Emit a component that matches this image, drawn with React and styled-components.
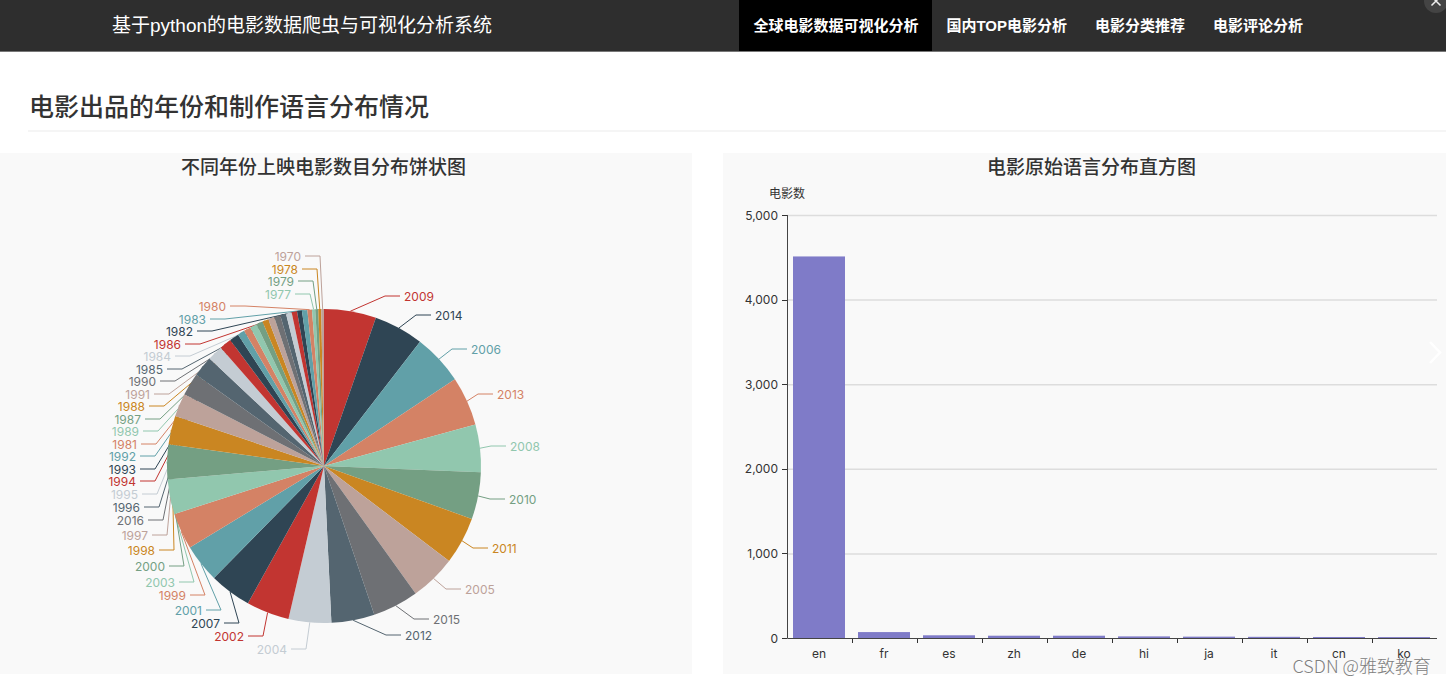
import React, { useState } from 'react'
import styled, { createGlobalStyle } from 'styled-components'

const GlobalStyle = createGlobalStyle`
    body {
        margin: 0;
        background-color: white;
        color: #333;
        font-family: "Liberation Sans", "Noto Sans CJK SC", sans-serif;
    }
`;

const Container = styled.div`
    position: relative;
    overflow: hidden;
    padding-bottom: 10px;
`;
const Header = styled.header`
    display: flex;
    align-items: stretch;
    justify-content: space-between;
    padding: 0 129px 0 112px;
    background-color: #2e2e2e;
    border-bottom: 1px solid #777;
`;
const Brand = styled.a`
    color: white;
    font-size: 19px;
    line-height: 52px;
    height: 51px;
    text-decoration: none;
    white-space: nowrap;
`;
const Nav = styled.nav`
    display: flex;
`;
const NavLink = styled.a`
    padding: 0 14px;
    color: white;
    background-color: ${props=>props.$active ? "black" : "transparent"};
    font-size: 15px;
    font-weight: 700;
    line-height: 51px;
    text-decoration: none;
    white-space: nowrap;
`;
const CloseButton = styled.button`
    position: absolute;
    top: -11px;
    right: -2px;
    width: 24px;
    height: 24px;
    padding: 0;
    display: flex;
    align-items: center;
    justify-content: center;
    border: none;
    border-radius: 50%;
    background-color: #444;
    cursor: pointer;
`;
const PageTitle = styled.h1`
    margin: 37px 0 21px 28px;
    padding: 0 0 5px 1px;
    border-bottom: 2px solid #f5f5f5;
    font-size: 25px;
    font-weight: 500;
    line-height: 36px;
`;
const Charts = styled.main`
    display: grid;
    grid-template-columns: 1fr 1fr;
`;
const Panel = styled.section`
    margin-right: ${props=>props.$gap ? "31px" : "0"};
    background-color: #f9f9f9;
`;
const PanelTitle = styled.h2`
    margin: 0;
    padding: ${props=>props.$pie ? "0 45px 0 0" : "0 0 0 14px"};
    font-size: 19px;
    font-weight: 500;
    line-height: 30px;
    text-align: center;
`;
const Chart = styled.svg`
    display: block;
    width: 100%;
    height: auto;
`;
const ChartText = styled.text`
    font-family: Inter, "Noto Sans CJK SC", sans-serif;
    font-size: 12px;
    dominant-baseline: central;
`;
const NextButton = styled.button`
    position: absolute;
    top: 338px;
    right: 2px;
    padding: 0;
    border: none;
    background: none;
    cursor: pointer;
`;
const Watermark = styled.span`
    position: absolute;
    right: 15px;
    bottom: 7px;
    color: #808080;
    font-family: "Noto Sans CJK SC", sans-serif;
    font-size: 18px;
    font-weight: 300;
    line-height: 24px;
    text-shadow: 1px 1px 0 white;
    pointer-events: none;
`;

const menu = [
    "全球电影数据可视化分析",
    "国内TOP电影分析",
    "电影分类推荐",
    "电影评论分析",
];

const palette = [
    "#c23531", "#2f4554", "#61a0a8", "#d48265", "#91c7ae", "#749f83",
    "#ca8622", "#bda29a", "#6e7074", "#546570", "#c4ccd3",
];

// year, end angle of the slice, elbow of the label line
const years = [
    [2009, 19.3, 61, -170],
    [2014, 37.7, 92, -151],
    [2006, 56.5, 128, -117],
    [2013, 74.7, 154, -72],
    [2008, 92.3, 167, -20],
    [2010, 109.7, 166, 33],
    [2011, 127.2, 149, 82],
    [2005, 144.3, 122, 123],
    [2015, 161.3, 90, 153],
    [2012, 177.3, 62, 169],
    [2004, 193.1, -18, 183],
    [2002, 209, -61, 170],
    [2007, 224.5, -85, 157],
    [2001, 238.7, -103, 144],
    [1999, 252.2, -119, 129],
    [2003, 265.1, -130, 116],
    [2000, 278, -140, 100],
    [1998, 288.6, -150, 84],
    [1997, 297.2, -157, 69],
    [2016, 305.5, -161, 54],
    [1996, 313.2, -165, 41],
    [1995, 318.9, -167, 28],
    [1994, 323.3, -169, 15],
    [1993, 326.8, -169, 3],
    [1992, 329.4, -169, -10],
    [1981, 332, -168, -22],
    [1989, 334.5, -166, -35],
    [1987, 336.9, -164, -47],
    [1988, 339.2, -160, -60],
    [1991, 341.5, -155, -72],
    [1990, 343.8, -149, -85],
    [1985, 346, -142, -97],
    [1984, 348.1, -134, -110],
    [1986, 350.1, -124, -122],
    [1982, 351.9, -112, -135],
    [1983, 353.9, -99, -147],
    [1980, 355.6, -79, -160],
    [1977, 356.8, -14, -172],
    [1979, 357.9, -11, -185],
    [1978, 359, -7, -197],
    [1970, 360, -4, -210],
];

const languages = [
    ["en", 4510], ["fr", 70], ["es", 32], ["zh", 27], ["de", 27],
    ["hi", 19], ["ja", 16], ["it", 14], ["cn", 12], ["ko", 11],
];

const RADIUS = 157;

const point = (angle) => {
    const rad = angle * Math.PI / 180;
    return [RADIUS * Math.sin(rad), -RADIUS * Math.cos(rad)];
}

const slices = years.map(([year, end, x, y], i) => {
    const start = i === 0 ? 0 : years[i-1][1];
    return { year, start, end, x, y, middle: (start + end) / 2, color: palette[i % palette.length] };
});

const PieChart = () => (
    <Chart viewBox="-324 -283 692 491" role="img" aria-label="不同年份上映电影数目分布饼状图">
        {slices.map(s=>{
            const side = s.x > 0 ? 1 : -1;
            return (
                <g key={s.year}>
                    <polyline
                        points={`${point(s.middle)} ${s.x},${s.y} ${s.x + side*15},${s.y}`}
                        fill="none"
                        stroke={s.color}
                    />
                    <ChartText x={s.x + side*19} y={s.y} fill={s.color} textAnchor={side > 0 ? "start" : "end"}>
                        {s.year}
                    </ChartText>
                </g>
            )
        })}
        {slices.map(s=>(
            <path
                key={s.year}
                d={`M0,0 L${point(s.start)} A${RADIUS},${RADIUS} 0 0 1 ${point(s.end)} Z`}
                fill={s.color}
            />
        ))}
    </Chart>
)

const LEFT = 64;
const RIGHT = 714;
const BASE = 455;
const STEP = 65;
const scale = (value) => BASE - value * 423 / 5000;

const BarChart = () => (
    <Chart viewBox="0 0 723 491" role="img" aria-label="电影原始语言分布直方图">
        <ChartText x={LEFT} y="10" fill="#333" textAnchor="middle">电影数</ChartText>
        {[5000, 4000, 3000, 2000, 1000, 0].map(v=>(
            <g key={v}>
                {v > 0 && <line x1={LEFT} x2={RIGHT} y1={scale(v)+0.5} y2={scale(v)+0.5} stroke="#ddd" strokeWidth="1.5" />}
                <line x1={LEFT-5} x2={LEFT} y1={Math.round(scale(v))+0.5} y2={Math.round(scale(v))+0.5} stroke="#333" />
                <ChartText x={LEFT-9} y={scale(v)} fill="#333" textAnchor="end">{v.toLocaleString("en-US")}</ChartText>
            </g>
        ))}
        {languages.map(([name, value], i)=>(
            <g key={name}>
                <rect x={LEFT + i*STEP + 6} y={scale(value)} width="52" height={BASE - scale(value)} fill="#7f7bc8" />
                {i > 0 && <line x1={LEFT + i*STEP + 0.5} x2={LEFT + i*STEP + 0.5} y1={BASE} y2={BASE+5} stroke="#333" />}
                <ChartText x={LEFT + i*STEP + 32} y={BASE+15} fill="#333" textAnchor="middle">{name}</ChartText>
            </g>
        ))}
        <path d={`M${LEFT+0.5},32 V${BASE+0.5} H${RIGHT}`} fill="none" stroke="#444" />
    </Chart>
)

const App = () => {
    const [active, setActive] = useState(0);

    return (
        <Container>
            <GlobalStyle/>
            <Header>
                <Brand href="#">基于python的电影数据爬虫与可视化分析系统</Brand>
                <Nav>
                    {menu.map((item, i)=>(
                        <NavLink href="#" key={item} $active={active === i} onClick={() => setActive(i)}>{item}</NavLink>
                    ))}
                </Nav>
            </Header>
            <CloseButton aria-label="关闭">
                <svg width="12" height="12" viewBox="0 0 12 12" fill="none" stroke="#eee" strokeWidth="1.5">
                    <path d="M1.5 1.5l9 9M10.5 1.5l-9 9" />
                </svg>
            </CloseButton>
            <PageTitle>电影出品的年份和制作语言分布情况</PageTitle>
            <Charts>
                <Panel $gap>
                    <PanelTitle $pie>不同年份上映电影数目分布饼状图</PanelTitle>
                    <PieChart/>
                </Panel>
                <Panel>
                    <PanelTitle>电影原始语言分布直方图</PanelTitle>
                    <BarChart/>
                </Panel>
            </Charts>
            <NextButton aria-label="下一页">
                <svg width="18" height="28" viewBox="0 0 18 28" fill="none" stroke="white" strokeWidth="2.5">
                    <path d="M4 4l10 10.500L4 25" />
                </svg>
            </NextButton>
            <Watermark>CSDN @雅致教育</Watermark>
        </Container>
    )
}

export default App
